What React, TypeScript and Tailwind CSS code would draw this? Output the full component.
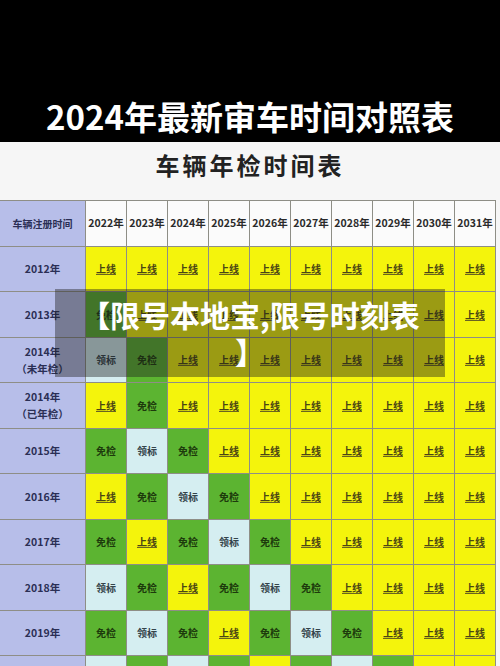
import React from "react";

type Kind = "Y" | "G" | "B";

const years = ["2022年", "2023年", "2024年", "2025年", "2026年", "2027年", "2028年", "2029年", "2030年", "2031年"];

const rows: { label: string; sub?: string; cells: string }[] = [
    { label: "2012年", cells: "YYYYYYYYYY" },
    { label: "2013年", cells: "GYYYYYYYYY" },
    { label: "2014年", sub: "（未年检）", cells: "BGYYYYYYYY" },
    { label: "2014年", sub: "（已年检）", cells: "YGYYYYYYYY" },
    { label: "2015年", cells: "GBGYYYYYYY" },
    { label: "2016年", cells: "YGBGYYYYYY" },
    { label: "2017年", cells: "GYGBGYYYYY" },
    { label: "2018年", cells: "BGYGBGYYYY" },
    { label: "2019年", cells: "GBGYGBGYYY" },
    { label: "2020年", cells: "BGBGYGBGYY" },
];

const Cell = ({ kind }: { kind: Kind }) => {
    if (kind === "G") {
        return (
            <div className="flex items-center justify-center bg-[#5cb431] text-[10px] font-bold text-[#1d3a0c]">
                免检
            </div>
        );
    }
    if (kind === "B") {
        return (
            <div className="flex items-center justify-center bg-[#d5eef1] text-[10px] font-semibold text-[#33434a]">
                领标
            </div>
        );
    }
    return (
        <div className="flex items-center justify-center bg-[#f4f40c] text-[10px] font-semibold text-[#4a4514]">
            <span className="underline decoration-[#6a6420] underline-offset-1">上线</span>
        </div>
    );
};

export default function App() {
    return (
        <div
            className="relative w-[500px] h-[666px] overflow-hidden bg-[#f6f6f6]"
            style={{ fontFamily: '"Noto Sans CJK SC", "Noto Sans", sans-serif' }}
        >
            <div className="h-[142px] bg-black pt-[96px] text-center text-[33px] font-bold leading-[40px] text-white">
                2024年最新审车时间对照表
            </div>

            <div className="h-[58px] pt-[8px] text-center text-[24px] font-bold leading-[30px] tracking-[3px] text-[#222]">
                车辆年检时间表
            </div>

            <div className="grid w-[496px] grid-cols-[85px_repeat(10,40px)] auto-rows-[44.5px] gap-px border-y border-r border-[#8e8e86] bg-[#8e8e86]">
                <div className="flex items-center justify-center bg-[#b7bee9] text-[10px] font-semibold text-[#2b2f55]">
                    车辆注册时间
                </div>
                {years.map((y) => (
                    <div
                        key={y}
                        className="flex items-center justify-center bg-[#fbfbfb] text-[10.5px] font-bold text-[#2a2a2a]"
                    >
                        {y}
                    </div>
                ))}

                {rows.map((r, i) => (
                    <React.Fragment key={i}>
                        <div className="flex flex-col items-center justify-center bg-[#b7bee9] text-[10.5px] font-bold leading-[17px] text-[#2b2f55]">
                            <span>{r.label}</span>
                            {r.sub && <span className="font-semibold">{r.sub}</span>}
                        </div>
                        {r.cells.split("").map((c, j) => (
                            <Cell key={j} kind={c as Kind} />
                        ))}
                    </React.Fragment>
                ))}
            </div>

            <div className="absolute left-[55px] top-[289px] flex h-[88px] w-[390px] items-center justify-center whitespace-nowrap bg-[rgba(30,30,30,0.42)] text-center text-[30px] font-bold leading-[37px] text-white">
                <p>
                    【限号本地宝,限号时刻表
                    <br />】
                </p>
            </div>
        </div>
    );
}
